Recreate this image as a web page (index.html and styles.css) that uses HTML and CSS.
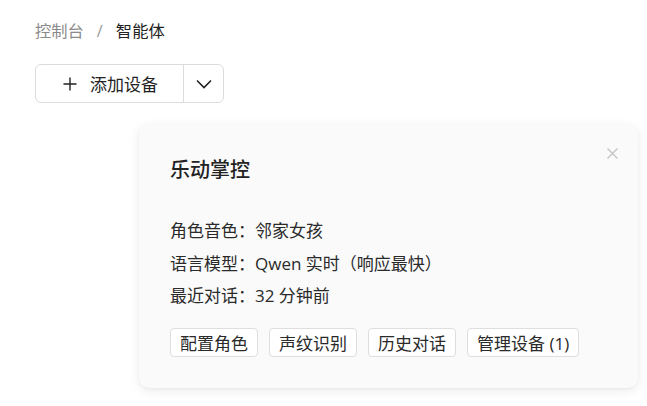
FILE: index.html
```html
<!DOCTYPE html>
<html lang="zh-CN">
  <head>
    <meta charset="UTF-8" />
    <meta name="viewport" content="width=device-width, initial-scale=1.0" />
    <title>智能体</title>
    <link rel="stylesheet" href="styles.css">
  </head>
  <body>
    <!-- 面包屑 -->
    <nav class="breadcrumb">
      <span class="crumb">控制台</span>
      <span class="sep">/</span>
      <span class="crumb current">智能体</span>
    </nav>

    <!-- 添加设备按钮 -->
    <div class="split-btn">
      <button class="split-main">
        <svg width="14" height="14" viewBox="0 0 14 14"><path d="M7 0.5v13M0.5 7h13" stroke="#222" stroke-width="1.4" fill="none"/></svg>
        <span>添加设备</span>
      </button>
      <button class="split-toggle">
        <svg width="16" height="10" viewBox="0 0 16 10"><path d="M1 1.5l7 7 7-7" stroke="#222" stroke-width="1.6" fill="none"/></svg>
      </button>
    </div>

    <!-- 智能体卡片 -->
    <div class="card">
      <button class="close">
        <svg width="11" height="11" viewBox="0 0 11 11"><path d="M0.5 0.5l10 10M10.5 0.5l-10 10" stroke="#c4c4c4" stroke-width="1.4"/></svg>
      </button>
      <h2 class="card-title">乐动掌控</h2>
      <ul class="info">
        <li>角色音色：邻家女孩</li>
        <li>语言模型：Qwen 实时（响应最快）</li>
        <li>最近对话：32 分钟前</li>
      </ul>
      <div class="actions">
        <button class="action">配置角色</button>
        <button class="action">声纹识别</button>
        <button class="action">历史对话</button>
        <button class="action">管理设备 (1)</button>
      </div>
    </div>
  </body>
</html>
```

FILE: styles.css
```css
body {
  margin: 0;
  padding: 20px 35px;
  font-family: "Open Sans", "Noto Sans CJK SC", sans-serif;
  color: #222;
  background: #fff;
}

.breadcrumb {
  font-size: 16.3px;
  line-height: 22px;
  display: flex;
  gap: 13px;
}

.crumb {
  color: #8a8a8a;
}

.sep {
  color: #9a9a9a;
}

.crumb.current {
  color: #222;
}

.split-btn {
  display: inline-flex;
  margin-top: 22px;
  height: 39px;
  border: 1px solid #dcdcdc;
  border-radius: 6px;
  background: #fff;
  box-sizing: border-box;
}

.split-btn button {
  border: none;
  background: none;
  font-family: inherit;
  font-size: 17px;
  color: #222;
  display: flex;
  align-items: center;
  cursor: pointer;
}

.split-main {
  width: 148px;
  justify-content: center;
  gap: 13px;
  padding: 0 0 0 2px;
  border-right: 1px solid #dcdcdc !important;
}

.split-toggle {
  width: 39px;
  justify-content: center;
  padding: 0;
}

.card {
  position: relative;
  margin: 21px 0 0 104px;
  width: 499px;
  height: 264px;
  box-sizing: border-box;
  padding: 33px 31px 0;
  background: #fafafa;
  border-radius: 10px;
  box-shadow: 0 3px 12px rgba(0, 0, 0, 0.08), 0 1px 3px rgba(0, 0, 0, 0.04);
}

.close {
  position: absolute;
  top: 23px;
  right: 20px;
  border: none;
  background: none;
  padding: 0;
  cursor: pointer;
}

.card-title {
  margin: 0;
  font-size: 20px;
  line-height: 25px;
  font-weight: 500;
  color: #222;
}

.info {
  list-style: none;
  margin: 33px 0 0;
  padding: 0;
  font-size: 17px;
  line-height: 32.5px;
  color: #2a2a2a;
}

.actions {
  display: flex;
  gap: 11px;
  margin-top: 15px;
}

.action {
  height: 29px;
  padding: 0 9px;
  border: 1px solid #dedede;
  border-radius: 4px;
  background: #fff;
  font-family: inherit;
  font-size: 17px;
  color: #2a2a2a;
  cursor: pointer;
}
```
